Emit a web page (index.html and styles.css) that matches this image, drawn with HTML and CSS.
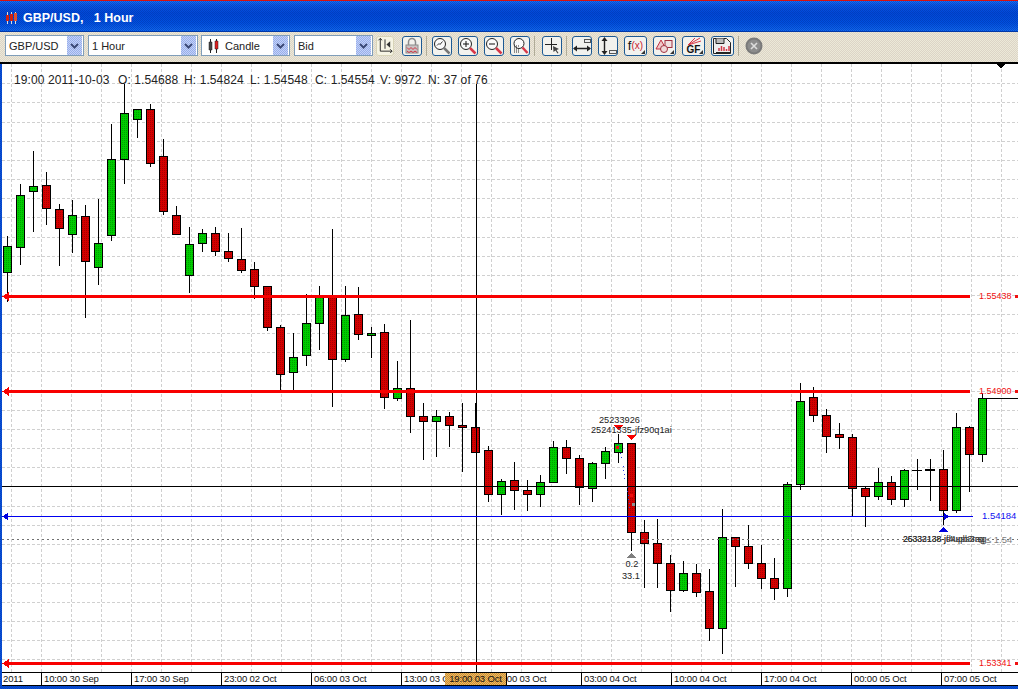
FILE: index.html
```html
<!DOCTYPE html>
<html lang="en">
<head>
<meta charset="utf-8">
<title>GBP/USD, 1 Hour</title>
<link rel="stylesheet" href="styles.css">
</head>
<body>
<div class="window">
  <header class="title">
    <svg class="title-icon" viewBox="0 0 12 12" width="12" height="12"><path d="M2.500 0V12M6.500 0V12M10.500 0V12" stroke="#ddd" fill="none"/><path d="M1 3h3v6H1zM5 2h3v7H5z" fill="#d02010"/><path d="M9 1h3v8H9z" fill="#e05030"/></svg>
    <span class="title-text">GBP/USD,   1 Hour</span>
  </header>

  <div class="toolbar">
    <div class="combo combo-a"><span class="combo-text">GBP/USD</span><span class="combo-arrow"><svg viewBox="0 0 9 6" width="9" height="6"><path d="M1 1l3.500 3.500L8 1" class="chev"/></svg></span></div>
    <div class="combo combo-b"><span class="combo-text">1 Hour</span><span class="combo-arrow"><svg viewBox="0 0 9 6" width="9" height="6"><path d="M1 1l3.500 3.500L8 1" class="chev"/></svg></span></div>
    <div class="combo combo-c"><svg class="combo-candles" viewBox="0 0 11 14" width="11" height="14"><path d="M2.500 0V14M8.500 0V14" stroke="#222" fill="none"/><path d="M1 3h3v8H1z" fill="#444" stroke="#222" stroke-width=".5"/><path d="M7 2h3v8H7z" fill="#e02020" stroke="#222" stroke-width=".5"/></svg><span class="combo-text">Candle</span><span class="combo-arrow"><svg viewBox="0 0 9 6" width="9" height="6"><path d="M1 1l3.500 3.500L8 1" class="chev"/></svg></span></div>
    <div class="combo combo-d"><span class="combo-text">Bid</span><span class="combo-arrow"><svg viewBox="0 0 9 6" width="9" height="6"><path d="M1 1l3.500 3.500L8 1" class="chev"/></svg></span></div>

    <button class="btn btn-plain"><svg viewBox="0 0 17 19" width="17" height="19"><path d="M3.500 2V15.500H16M14 13.500l2 2-2 2M1.500 4l2-2 2 2" fill="none" stroke="#222"/><path d="M8.500 3V13" stroke="#222"/><path d="M14 5v7l-4-3.500z" fill="#333"/></svg></button>
    <button class="btn"><svg viewBox="0 0 18 18" width="18" height="18"><path d="M5.500 8V5a3.500 3.500 0 0 1 7 0v3" fill="none" stroke="#8a8a8a" stroke-width="1.500"/><rect x="3" y="8" width="12" height="8" fill="#c8c4c4" stroke="#8a8a8a"/><path d="M4 10.500l2 2 2-2 2 2 2-2 2 2M4 14l2 1.500 2-1.500 2 1.500 2-1.500 2 1.500" fill="none" stroke="#d03040"/></svg></button>
    <span class="sep"></span>
    <button class="btn"><svg viewBox="0 0 18 18" width="18" height="18"><circle cx="7" cy="7" r="5.500" class="lens"/><path d="M4 8.500l2-2 1 1 2.500-3" fill="none" stroke="#333"/><path d="M11 11l5.500 5.500" stroke="#777" stroke-width="2.500"/></svg></button>
    <button class="btn"><svg viewBox="0 0 18 18" width="18" height="18"><circle cx="7" cy="7" r="5.500" class="lens"/><path d="M4 7h6M7 4v6" stroke="#111" fill="none"/><path d="M11 11l5.500 5.500" stroke="#d83848" stroke-width="2.500"/></svg></button>
    <button class="btn"><svg viewBox="0 0 18 18" width="18" height="18"><circle cx="7" cy="7" r="5.500" class="lens"/><path d="M4 7h6" stroke="#111" fill="none"/><path d="M11 11l5.500 5.500" stroke="#d83848" stroke-width="2.500"/></svg></button>
    <button class="btn"><svg viewBox="0 0 18 18" width="18" height="18"><circle cx="8" cy="6.500" r="5" class="lens"/><path d="M3 9h1M5 9h1M7 9h1M3 11h1M5 11h1M3 13h1M5 13h1M7 13h1M3 15h1M5 15h1M7 15h1" stroke="#222"/><path d="M11.500 10.500l5 5.500" stroke="#d83848" stroke-width="2.500"/></svg></button>
    <span class="sep sep-wide"></span>
    <button class="btn"><svg viewBox="0 0 18 18" width="18" height="18"><path d="M8.500 1V13M2 7.500H14" stroke="#222" fill="none"/><path d="M10 9l6 3-2.500 1 2 3-1 .5-2-3-2 1.500z" fill="#444"/></svg></button>
    <span class="sep"></span>
    <button class="btn"><svg viewBox="0 0 18 18" width="18" height="18"><rect x="11.500" y="2.500" width="6" height="3" fill="#eee" stroke="#555"/><path d="M1 11.500H17" stroke="#222" stroke-width="1.400"/><path d="M0 11.500l4-3v6zM18 11.500l-4-3v6z" fill="#222"/></svg></button>
    <button class="btn"><svg viewBox="0 0 18 18" width="18" height="18"><rect x="10.500" y="13.500" width="7" height="3" fill="#eee" stroke="#555"/><path d="M5.500 2V16" stroke="#222" stroke-width="1.400"/><path d="M5.500 0l3 4h-6zM5.500 18l3-4h-6z" fill="#222"/></svg></button>
    <button class="btn btn-wide btn-fx"><span class="fx-f">f</span><span class="fx-x">(x)</span><i class="corner"></i></button>
    <button class="btn btn-wide"><svg viewBox="0 0 21 18" width="21" height="18"><path d="M7 3l5 9H2z" fill="#f0c8c8" stroke="#c03040"/><rect x="11" y="3.500" width="7" height="7" fill="#f0e0e0" stroke="#a03040"/><circle cx="10" cy="12" r="3.500" fill="#f0d8d8" stroke="#a03040"/></svg><i class="corner"></i></button>
    <button class="btn btn-wide btn-gf"><svg class="gf-fan" viewBox="0 0 20 8" width="20" height="8"><path d="M5 8L17 1M5 8L18 4M5 8L12 1" stroke="#d83848" fill="none"/></svg><span class="gf-text">GF</span><i class="corner"></i></button>
    <button class="btn btn-wide"><svg viewBox="0 0 21 18" width="21" height="18"><path d="M1.500 1.500h13l4 4v11h-17z" fill="#eee" stroke="#222"/><path d="M4 1.500v5h8v-5" fill="#bbb" stroke="#222"/><path d="M7 14v-3M9.500 14v-5M12 14v-4M14.500 14v-2M17 14v-5" stroke="#d03848" stroke-width="1.500"/><path d="M4 15.500h14" stroke="#222"/></svg></button>
    <span class="sep sep-mid"></span>
    <svg class="stop" viewBox="0 0 18 18" width="18" height="18"><circle cx="9" cy="9" r="8.500" fill="#7a7a7a"/><circle cx="9" cy="9" r="6.500" fill="#8c8c8c"/><path d="M6 6l6 6M12 6l-6 6" stroke="#ddd" stroke-width="1.600"/></svg>
  </div>

  <svg class="chart" viewBox="2 64 1016 608" width="1016" height="608" shape-rendering="crispEdges">
    <defs>
      <pattern id="dither-green" width="2" height="2" patternUnits="userSpaceOnUse"><rect width="2" height="2" fill="#00cc00"/><rect width="1" height="1" fill="#00a000"/></pattern>
      <pattern id="dither-red" width="2" height="2" patternUnits="userSpaceOnUse"><rect width="2" height="2" fill="#d40000"/><rect width="1" height="1" fill="#a80000"/></pattern>
    </defs>
    <path class="grid" d="M11.500 64V672M41.500 64V672M71.500 64V672M101.500 64V672M131.500 64V672M161.500 64V672M191.500 64V672M221.500 64V672M251.500 64V672M281.500 64V672M311.500 64V672M341.500 64V672M371.500 64V672M401.500 64V672M431.500 64V672M461.500 64V672M491.500 64V672M521.500 64V672M551.500 64V672M581.500 64V672M611.500 64V672M641.500 64V672M671.500 64V672M701.500 64V672M731.500 64V672M761.500 64V672M791.500 64V672M821.500 64V672M851.500 64V672M881.500 64V672M911.500 64V672M941.500 64V672M971.500 64V672M1001.500 64V672"/>
    <path class="grid" d="M2 83.500H1018M2 102.500H1018M2 122.500H1018M2 141.500H1018M2 160.500H1018M2 179.500H1018M2 198.500H1018M2 217.500H1018M2 237.500H1018M2 256.500H1018M2 275.500H1018M2 295.500H1018M2 314.500H1018M2 333.500H1018M2 352.500H1018M2 371.500H1018M2 391.500H1018M2 410.500H1018M2 429.500H1018M2 448.500H1018M2 467.500H1018M2 506.500H1018M2 525.500H1018M2 544.500H1018M2 563.500H1018M2 583.500H1018M2 602.500H1018M2 621.500H1018M2 640.500H1018M2 659.500H1018"/>

    <path class="wick" d="M7.500 236V302M20.500 184V265M33.500 151V232M46.500 172V225M59.500 204V266M72.500 200V253M85.500 205V318M98.500 199V285M111.500 124V241M124.500 84V184M137.500 109V138M150.500 104V167M163.500 139V215M176.500 206V234M189.500 227V293M202.500 229V252M215.500 227V256M228.500 233V262M241.500 228V273M254.500 262V299M267.500 286V331M280.500 325V390M293.500 333V390M306.500 294V366M319.500 286V350M332.500 229V407M345.500 286V362M358.500 287V340M371.500 327V358M384.500 324V409M397.500 361V401M410.500 320V433M423.500 403V460M436.500 410V457M449.500 412V447M462.500 403V472M475.500 403V452M488.500 446V502M501.500 479V515M514.500 462V510M527.500 480V511M540.500 475V507M553.500 441V482M566.500 440V474M579.500 455V505M592.500 462V502M605.500 447V479M618.500 434V463M631.500 443V551M644.500 520V588M657.500 519V588M670.500 555V612M683.500 561V592M696.500 564V597M709.500 569V641M722.500 509V654M735.500 537V587M748.500 525V569M761.500 545V589M774.500 558V600M787.500 482V597M800.500 383V490M813.500 387V422M826.500 409V453M839.500 423V449M852.500 434V516M865.500 487V527M878.500 468V500M891.500 476V505M904.500 469V507M917.500 459V490M930.500 459V501M943.500 450V525M956.500 413V513M969.500 426V492M982.500 393V462"/>
    <path class="wick" d="M912 470.500H922M925 469.500H935M925 470.500H935M986 398.500H1018"/>
    <path class="body-up" d="M3.500 246.500h8V272.500h-8zM16.500 195.500h8V247.500h-8zM29.500 186.500h8V191.500h-8zM68.500 215.500h8V234.500h-8zM94.500 243.500h8V267.500h-8zM107.500 159.500h8V235.500h-8zM120.500 113.500h8V159.500h-8zM133.500 109.500h8V119.500h-8zM185.500 244.500h8V275.500h-8zM198.500 233.500h8V243.500h-8zM289.500 357.500h8V372.500h-8zM302.500 323.500h8V355.500h-8zM315.500 296.500h8V323.500h-8zM341.500 315.500h8V359.500h-8zM367.500 333.500h8V335.500h-8zM393.500 388.500h8V398.500h-8zM432.500 416.500h8V421.500h-8zM497.500 481.500h8V494.500h-8zM536.500 482.500h8V494.500h-8zM549.500 447.500h8V482.500h-8zM588.500 463.500h8V488.500h-8zM601.500 451.500h8V463.500h-8zM614.500 443.500h8V452.500h-8zM679.500 573.500h8V590.500h-8zM718.500 537.500h8V628.500h-8zM783.500 484.500h8V588.500h-8zM796.500 401.500h8V484.500h-8zM874.500 482.500h8V496.500h-8zM900.500 470.500h8V499.500h-8zM952.500 427.500h8V510.500h-8zM978.500 398.500h8V454.500h-8z"/>
    <path class="body-down" d="M42.500 185.500h8V208.500h-8zM55.500 209.500h8V228.500h-8zM81.500 216.500h8V261.500h-8zM146.500 109.500h8V163.500h-8zM159.500 156.500h8V211.500h-8zM172.500 215.500h8V234.500h-8zM211.500 233.500h8V251.500h-8zM224.500 251.500h8V258.500h-8zM237.500 259.500h8V270.500h-8zM250.500 269.500h8V286.500h-8zM263.500 286.500h8V327.500h-8zM276.500 327.500h8V374.500h-8zM328.500 296.500h8V359.500h-8zM354.500 314.500h8V334.500h-8zM380.500 332.500h8V397.500h-8zM406.500 388.500h8V416.500h-8zM419.500 416.500h8V421.500h-8zM445.500 416.500h8V425.500h-8zM458.500 425.500h8V427.500h-8zM471.500 427.500h8V452.500h-8zM484.500 450.500h8V494.500h-8zM510.500 480.500h8V490.500h-8zM523.500 490.500h8V494.500h-8zM562.500 447.500h8V458.500h-8zM575.500 458.500h8V487.500h-8zM627.500 443.500h8V532.500h-8zM640.500 532.500h8V543.500h-8zM653.500 543.500h8V563.500h-8zM666.500 563.500h8V590.500h-8zM692.500 573.500h8V592.500h-8zM705.500 591.500h8V628.500h-8zM731.500 537.500h8V546.500h-8zM744.500 546.500h8V563.500h-8zM757.500 563.500h8V578.500h-8zM770.500 578.500h8V588.500h-8zM809.500 397.500h8V415.500h-8zM822.500 415.500h8V436.500h-8zM835.500 434.500h8V437.500h-8zM848.500 437.500h8V488.500h-8zM861.500 488.500h8V496.500h-8zM887.500 482.500h8V499.500h-8zM939.500 469.500h8V510.500h-8zM965.500 427.500h8V454.500h-8z"/>

    <path class="trade" d="M618.500 445L622 460M623 466L625 480M627 487L630 510"/>
    <path class="dot-red" d="M616 446h3v3h-3zM630 494h3v3h-3z"/>
    <path class="dot-grey" d="M632 503h3v3h-3z"/>

    <path class="price-dotted" d="M2 539.500H1018"/>
    <path class="line-black" d="M2 486.500H1018M476.500 84V672"/>
    <path class="line-blue" d="M2 516.500H973"/>
    <path class="line-red" d="M5 296.500H970M5 391.500H970M5 663.500H970"/>
    <path class="arrow-red" d="M2 296.500L9 292V301zM2 391.500L9 387V396zM2 663.500L9 659V668z"/>
    <path class="arrow-blue" d="M2 516.500L8 513V520zM949 516.500L944 513V520z"/>
    <path class="arrow-blue" d="M943 527L948 532H938z"/>
    <path class="arrow-red" d="M614 425H623L618.500 430zM627 435H636L631.500 440z"/>
    <path class="arrow-grey" d="M631.500 553L636 558H627z"/>
    <path class="arrow-black" d="M996 64H1006L1001 68z"/>

    <g class="chart-text" shape-rendering="auto">
      <text class="readout" y="84"><tspan x="14">19:00 2011-10-03</tspan><tspan x="118">O: 1.54688</tspan><tspan x="184">H: 1.54824</tspan><tspan x="250">L: 1.54548</tspan><tspan x="315">C: 1.54554</tspan><tspan x="380">V: 9972</tspan><tspan x="428">N: 37 of 76</tspan></text>
      <text class="price-red" x="979" y="299">1.55438</text>
      <text class="price-red" x="979" y="394">1.54900</text>
      <text class="price-red" x="979" y="666">1.53341</text>
      <text class="price-blue" x="982" y="519">1.54184</text>
      <text class="mark-sm" x="599" y="423">25233926</text>
      <text class="mark-sm" x="591" y="433">25241335-jfz90q1ai</text>
      <text class="mark-sm" x="625.500" y="567">0.2</text>
      <text class="mark-sm" x="622" y="579">33.1</text>
      <text class="mark-grey" x="978" y="543">0 ≤ 1.54</text>
      <text class="mark-xs" x="903" y="542">25332138-jf4upb3rag</text>
      <text class="mark-xs" x="903" y="542">26333138-jd4upb3rsg</text>
    </g>
    <path class="dot-red" d="M1015 295h3v3h-3zM1015 390h3v3h-3zM1015 662h3v3h-3z"/>
  </svg>

  <div class="axis">
    <span class="tick tick-first">2011</span>
    <span class="tick">10:00 30 Sep</span>
    <span class="tick">17:00 30 Sep</span>
    <span class="tick">23:00 02 Oct</span>
    <span class="tick">06:00 03 Oct</span>
    <span class="tick">13:00 03 Oct</span>
    <span class="tick">20:00 03 Oct</span>
    <span class="tick">03:00 04 Oct</span>
    <span class="tick">10:00 04 Oct</span>
    <span class="tick">17:00 04 Oct</span>
    <span class="tick">00:00 05 Oct</span>
    <span class="tick">07:00 05 Oct</span>
    <span class="axis-cursor">19:00 03 Oct</span>
  </div>
</div>
</body>
</html>
```

FILE: styles.css
```css
* { box-sizing: border-box; }

html, body {
  margin: 0;
  height: 100%;
  overflow: hidden;
}

body {
  background-color: #0a50d8;
  background-image: conic-gradient(#0030a060 25%, transparent 0 50%, #0030a060 0 75%, transparent 0);
  background-size: 2px 2px;
  font-family: "Liberation Sans", Arial, sans-serif;
}

.window {
  display: flex;
  flex-direction: column;
  height: 686px;
  padding-left: 2px;
}

/* title bar */
.title {
  display: flex;
  align-items: center;
  gap: 6px;
  height: 32px;
  margin-left: -2px;
  padding: 3px 0 0 5px;
  border-top: 1px solid #d81010;
  border-bottom: 1px solid #0038a8;
  background-color: #0a50d8;
  background-image:
    conic-gradient(#0030a070 25%, transparent 0 50%, #0030a070 0 75%, transparent 0),
    linear-gradient(#1a70f8 0, #0a58e8 4px, #0048d8 12px, #0050e0 22px, #1068f0 30px);
  background-size: 2px 2px, 100% 100%;
}

.title-icon { flex: none; }

.title-text {
  color: #fff;
  font-size: 12.500px;
  font-weight: 700;
  white-space: pre;
}

/* toolbar */
.toolbar {
  display: flex;
  align-items: center;
  height: 32px;
  margin-left: -2px;
  padding: 0 0 3px 5px;
  border-bottom: 2px solid #000;
  background-color: #ece9d8;
  background-image: conic-gradient(#c8b8b070 25%, transparent 0 50%, #c8b8b070 0 75%, transparent 0);
  background-size: 2px 2px;
}

.combo {
  display: flex;
  align-items: center;
  flex: none;
  height: 21px;
  padding-left: 3px;
  border: 1px solid #7f9db9;
  background: #fff;
  font-size: 11px;
  color: #222;
}

.combo-a { width: 79px; margin-right: 4px; }
.combo-b { width: 110px; margin-right: 3px; }
.combo-c { width: 89px; margin-right: 4px; padding-left: 6px; gap: 6px; }
.combo-d { width: 79px; margin-right: 3px; }

.combo-candles { flex: none; }

.combo-text { flex: 1; white-space: nowrap; }

.combo-arrow {
  display: flex;
  align-items: center;
  justify-content: center;
  flex: none;
  width: 15px;
  height: 19px;
  margin-right: 1px;
  background-color: #c4d2f8;
  background-image: conic-gradient(#98aeea 25%, transparent 0 50%, #98aeea 0 75%, transparent 0);
  background-size: 2px 2px;
}

.chev {
  fill: none;
  stroke: #3c4a78;
  stroke-width: 2;
}

.btn {
  position: relative;
  display: flex;
  align-items: center;
  justify-content: center;
  flex: none;
  width: 20px;
  height: 20px;
  margin-right: 6px;
  padding: 0;
  overflow: hidden;
  border: 1px solid #1c5a94;
  border-radius: 3px;
  background: #f2f2ee;
  color: #111;
  font-family: "Liberation Sans", Arial, sans-serif;
}

.btn-plain {
  width: 18px;
  margin-right: 8px;
  border-color: #d8d4b8;
  background: #f6f4e4;
}

.btn-wide { width: 23px; }

.btn-fx { font-size: 13px; padding-bottom: 1px; }
.fx-f { color: #111; }
.fx-x { color: #c82030; font-size: 10px; }

.btn-gf {
  display: block;
  text-align: center;
}

.gf-fan { display: block; }

.gf-text {
  display: block;
  font-size: 10px;
  font-weight: 700;
  line-height: 9px;
}

.corner {
  position: absolute;
  right: 1px;
  bottom: 1px;
  border-style: solid;
  border-width: 0 0 4px 4px;
  border-color: transparent transparent #333 transparent;
}

.lens { fill: #fafafa; stroke: #222; }

.sep {
  flex: none;
  width: 1px;
  height: 20px;
  margin: 0 5px 0 -2px;
  background: #b0ac98;
}

.sep-wide { margin-right: 7px; }
.sep-mid { margin-right: 6px; }

.stop { flex: none; }

/* chart */
.chart {
  display: block;
  flex: none;
  background: #fff;
}

.grid {
  fill: none;
  stroke: #d0d0d0;
  stroke-dasharray: 3 2;
}

.wick { fill: none; stroke: #000; }
.body-up { fill: url(#dither-green); stroke: #000; }
.body-down { fill: url(#dither-red); stroke: #000; }

.trade { fill: none; stroke: #3040e0; stroke-dasharray: 1 3; }
.dot-red { fill: #f01010; }
.dot-grey { fill: #909090; }

.price-dotted { fill: none; stroke: #707070; stroke-dasharray: 2 3; }
.line-black { fill: none; stroke: #000; }
.line-blue { fill: none; stroke: #0000f0; }
.line-red { fill: none; stroke: #f80000; stroke-width: 3; }

.arrow-red { fill: #f80000; }
.arrow-blue { fill: #0000e0; }
.arrow-grey { fill: #808080; }
.arrow-black { fill: #000; }

.chart-text { font-family: "Liberation Sans", Arial, sans-serif; fill: #111; }
.readout { font-size: 12px; letter-spacing: .1px; fill: #222; white-space: pre; }
.price-red { font-size: 9px; fill: #f01010; }
.price-blue { font-size: 9.500px; fill: #1010f0; }
.mark-sm { font-size: 9.200px; fill: #222; }
.mark-xs { font-size: 8.600px; fill: #333; }
.mark-grey { font-size: 9.500px; fill: #808080; }

/* time axis */
.axis {
  position: relative;
  display: flex;
  flex: none;
  height: 14px;
  border-top: 1px solid #000;
  border-bottom: 1px solid #000;
  background: #fff;
  font-size: 9.500px;
  letter-spacing: -.15px;
  line-height: 12px;
  color: #111;
}

.tick {
  flex: none;
  width: 90px;
  padding-left: 2px;
  border-left: 1px solid #000;
  white-space: nowrap;
  overflow: hidden;
}

.tick-first {
  width: 39px;
  padding-left: 1px;
  border-left: 0;
}

.axis-cursor {
  position: absolute;
  top: 0;
  left: 443px;
  width: 62px;
  height: 12px;
  border-right: 1px solid #000;
  background-color: #f0b860;
  background-image: conic-gradient(#c89038 25%, transparent 0 50%, #c89038 0 75%, transparent 0);
  background-size: 2px 2px;
  text-align: center;
  white-space: nowrap;
}
```
